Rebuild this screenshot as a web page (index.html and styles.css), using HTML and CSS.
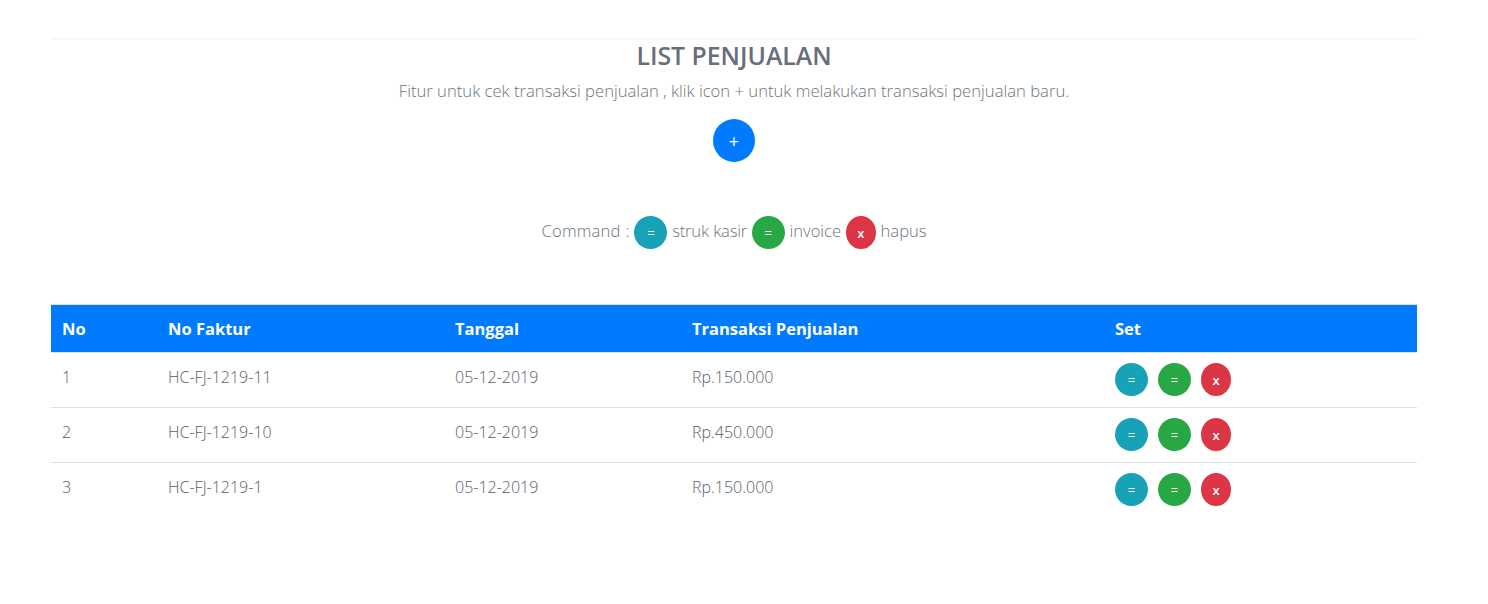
FILE: index.html
```html
<!DOCTYPE html>
<html lang="en">
<head>
    <meta charset="UTF-8">
    <title>List Penjualan</title>
    <link rel="stylesheet" href="styles.css">
</head>
<body>
    <div class="container">
        <hr class="top-line">
        <div class="heading">
            <h4>LIST PENJUALAN</h4>
            <p class="lead">Fitur untuk cek transaksi penjualan , klik icon + untuk melakukan transaksi penjualan baru.</p>
            <a class="btn btn-add" href="#">+</a>
            <p class="command">
                <span class="wide">Command :</span>
                <a class="btn btn-info" href="#">=</a> <span class="narrow">struk kasir</span>
                <a class="btn btn-success" href="#">=</a> invoice
                <a class="btn btn-danger" href="#">x</a> hapus
            </p>
        </div>

        <table>
            <colgroup>
                <col class="col-no">
                <col class="col-faktur">
                <col class="col-tanggal">
                <col class="col-total">
                <col>
            </colgroup>
            <thead>
                <tr>
                    <th>No</th>
                    <th>No Faktur</th>
                    <th>Tanggal</th>
                    <th>Transaksi Penjualan</th>
                    <th>Set</th>
                </tr>
            </thead>
            <tbody>
                <tr>
                    <td>1</td>
                    <td>HC-FJ-1219-11</td>
                    <td>05-12-2019</td>
                    <td>Rp.150.000</td>
                    <td>
                        <div class="actions">
                            <a class="btn btn-info" href="#">=</a>
                            <a class="btn btn-success" href="#">=</a>
                            <a class="btn btn-danger" href="#">x</a>
                        </div>
                    </td>
                </tr>
                <tr>
                    <td>2</td>
                    <td>HC-FJ-1219-10</td>
                    <td>05-12-2019</td>
                    <td>Rp.450.000</td>
                    <td>
                        <div class="actions">
                            <a class="btn btn-info" href="#">=</a>
                            <a class="btn btn-success" href="#">=</a>
                            <a class="btn btn-danger" href="#">x</a>
                        </div>
                    </td>
                </tr>
                <tr>
                    <td>3</td>
                    <td>HC-FJ-1219-1</td>
                    <td>05-12-2019</td>
                    <td>Rp.150.000</td>
                    <td>
                        <div class="actions">
                            <a class="btn btn-info" href="#">=</a>
                            <a class="btn btn-success" href="#">=</a>
                            <a class="btn btn-danger" href="#">x</a>
                        </div>
                    </td>
                </tr>
            </tbody>
        </table>
    </div>
</body>
</html>
```

FILE: styles.css
```css
body {
    margin: 0;
    background-color: #fff;
    font-family: "Open Sans", "Noto Sans", sans-serif;
    font-weight: 300;
    color: #6c757d;
}
.container {
    width: 1366px;
    margin-left: 51px;
    padding-top: 38px;
}
.top-line {
    margin: 0;
    border: 0;
    border-top: 2px solid #f8f8f8;
}
.heading {
    text-align: center;
}
h4 {
    margin: -1px 0 0;
    height: 32px;
    font-size: 24.8px;
    line-height: 32px;
    font-weight: 600;
    color: #686e7a;
}
.lead {
    margin: 8px 0 0;
    font-size: 16.65px;
    line-height: 24px;
}
.btn {
    display: inline-block;
    color: #fff;
    text-decoration: none;
    text-align: center;
    font-size: 13px;
    font-weight: 400;
    border-radius: 50%;
    width: 33px;
    height: 33px;
    line-height: 34px;
    vertical-align: middle;
}
.btn-add {
    width: 42px;
    height: 43px;
    line-height: 45px;
    margin-top: 16px;
    font-size: 18px;
    background-color: #007bff;
}
.btn-info {
    background-color: #17a2b8;
}
.btn-success {
    background-color: #28a745;
}
.btn-danger {
    width: 30px;
    background-color: #dc3545;
    font-weight: 600;
}
.command {
    margin: 52px 0 0;
    font-size: 16.6px;
    line-height: 33px;
    word-spacing: 0.4px;
}
.wide {
    letter-spacing: 0.2px;
}
.narrow {
    letter-spacing: -0.2px;
}
table {
    width: 100%;
    margin-top: 55px;
    border-collapse: separate;
    border-spacing: 0;
    table-layout: fixed;
}
.col-no {
    width: 106px;
}
.col-faktur {
    width: 287px;
}
.col-tanggal {
    width: 237px;
}
.col-total {
    width: 423px;
}
th {
    box-sizing: border-box;
    height: 49px;
    padding: 0 11px;
    text-align: left;
    background-color: #007bff;
    border-top: 1px solid #dee2e6;
    border-bottom: 1px solid #dee2e6;
    color: #fff;
    font-size: 16.5px;
    font-weight: 700;
}
td {
    box-sizing: border-box;
    height: 54px;
    padding: 11px 11px 0;
    vertical-align: top;
    line-height: 26px;
    font-size: 16px;
    color: #55606a;
}
tbody tr + tr td {
    height: 55px;
    border-top: 1px solid #dee2e6;
}
.actions {
    display: flex;
    gap: 10px;
    margin-top: -1px;
}
```
